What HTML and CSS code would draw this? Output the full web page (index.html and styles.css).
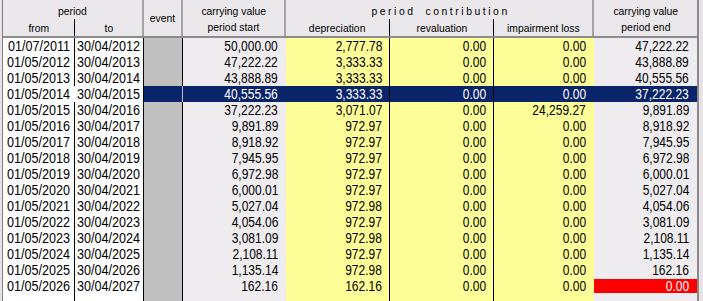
FILE: index.html
```html
<!DOCTYPE html>
<html>
<head>
<meta charset="utf-8">
<link rel="stylesheet" href="styles.css">
</head>
<body>
<div class="sheet">
  <div class="grid head">
    <div class="hgroup span2">
      <div class="htitle"><span class="t">period</span></div>
      <div class="hsub cols2">
        <div class="hs div"><span class="t">from</span></div>
        <div class="hs"><span class="t">to</span></div>
      </div>
    </div>
    <div class="hcell single"><span class="t">event</span></div>
    <div class="hcell"><div><span class="t">carrying value</span></div><div><span class="t">period start</span></div></div>
    <div class="hgroup span3">
      <div class="htitle"><span class="t spaced">period contribution</span></div>
      <div class="hsub cols3">
        <div class="hs div"><span class="t">depreciation</span></div>
        <div class="hs div"><span class="t">revaluation</span></div>
        <div class="hs"><span class="t">impairment loss</span></div>
      </div>
    </div>
    <div class="hcell last"><div><span class="t">carrying value</span></div><div><span class="t">period end</span></div></div>
  </div>

  <div class="grid row"><div class="c d"><span class="t">01/07/2011</span></div><div class="c d"><span class="t">30/04/2012</span></div><div class="c ev"></div><div class="c lv"><span class="t">50,000.00</span></div><div class="c y div"><span class="t">2,777.78</span></div><div class="c y div"><span class="t">0.00</span></div><div class="c y"><span class="t">0.00</span></div><div class="c lv"><span class="t">47,222.22</span></div></div>
  <div class="grid row"><div class="c d"><span class="t">01/05/2012</span></div><div class="c d"><span class="t">30/04/2013</span></div><div class="c ev"></div><div class="c lv"><span class="t">47,222.22</span></div><div class="c y div"><span class="t">3,333.33</span></div><div class="c y div"><span class="t">0.00</span></div><div class="c y"><span class="t">0.00</span></div><div class="c lv"><span class="t">43,888.89</span></div></div>
  <div class="grid row"><div class="c d"><span class="t">01/05/2013</span></div><div class="c d"><span class="t">30/04/2014</span></div><div class="c ev"></div><div class="c lv"><span class="t">43,888.89</span></div><div class="c y div"><span class="t">3,333.33</span></div><div class="c y div"><span class="t">0.00</span></div><div class="c y"><span class="t">0.00</span></div><div class="c lv"><span class="t">40,555.56</span></div></div>
  <div class="grid row sel"><div class="c d"><span class="t">01/05/2014</span></div><div class="c d"><span class="t">30/04/2015</span></div><div class="c ev"></div><div class="c lv"><span class="t">40,555.56</span></div><div class="c y div"><span class="t">3,333.33</span></div><div class="c y div"><span class="t">0.00</span></div><div class="c y"><span class="t">0.00</span></div><div class="c lv"><span class="t">37,222.23</span></div></div>
  <div class="grid row"><div class="c d"><span class="t">01/05/2015</span></div><div class="c d"><span class="t">30/04/2016</span></div><div class="c ev"></div><div class="c lv"><span class="t">37,222.23</span></div><div class="c y div"><span class="t">3,071.07</span></div><div class="c y div"><span class="t">0.00</span></div><div class="c y"><span class="t">24,259.27</span></div><div class="c lv"><span class="t">9,891.89</span></div></div>
  <div class="grid row"><div class="c d"><span class="t">01/05/2016</span></div><div class="c d"><span class="t">30/04/2017</span></div><div class="c ev"></div><div class="c lv"><span class="t">9,891.89</span></div><div class="c y div"><span class="t">972.97</span></div><div class="c y div"><span class="t">0.00</span></div><div class="c y"><span class="t">0.00</span></div><div class="c lv"><span class="t">8,918.92</span></div></div>
  <div class="grid row"><div class="c d"><span class="t">01/05/2017</span></div><div class="c d"><span class="t">30/04/2018</span></div><div class="c ev"></div><div class="c lv"><span class="t">8,918.92</span></div><div class="c y div"><span class="t">972.97</span></div><div class="c y div"><span class="t">0.00</span></div><div class="c y"><span class="t">0.00</span></div><div class="c lv"><span class="t">7,945.95</span></div></div>
  <div class="grid row"><div class="c d"><span class="t">01/05/2018</span></div><div class="c d"><span class="t">30/04/2019</span></div><div class="c ev"></div><div class="c lv"><span class="t">7,945.95</span></div><div class="c y div"><span class="t">972.97</span></div><div class="c y div"><span class="t">0.00</span></div><div class="c y"><span class="t">0.00</span></div><div class="c lv"><span class="t">6,972.98</span></div></div>
  <div class="grid row"><div class="c d"><span class="t">01/05/2019</span></div><div class="c d"><span class="t">30/04/2020</span></div><div class="c ev"></div><div class="c lv"><span class="t">6,972.98</span></div><div class="c y div"><span class="t">972.97</span></div><div class="c y div"><span class="t">0.00</span></div><div class="c y"><span class="t">0.00</span></div><div class="c lv"><span class="t">6,000.01</span></div></div>
  <div class="grid row"><div class="c d"><span class="t">01/05/2020</span></div><div class="c d"><span class="t">30/04/2021</span></div><div class="c ev"></div><div class="c lv"><span class="t">6,000.01</span></div><div class="c y div"><span class="t">972.97</span></div><div class="c y div"><span class="t">0.00</span></div><div class="c y"><span class="t">0.00</span></div><div class="c lv"><span class="t">5,027.04</span></div></div>
  <div class="grid row"><div class="c d"><span class="t">01/05/2021</span></div><div class="c d"><span class="t">30/04/2022</span></div><div class="c ev"></div><div class="c lv"><span class="t">5,027.04</span></div><div class="c y div"><span class="t">972.98</span></div><div class="c y div"><span class="t">0.00</span></div><div class="c y"><span class="t">0.00</span></div><div class="c lv"><span class="t">4,054.06</span></div></div>
  <div class="grid row"><div class="c d"><span class="t">01/05/2022</span></div><div class="c d"><span class="t">30/04/2023</span></div><div class="c ev"></div><div class="c lv"><span class="t">4,054.06</span></div><div class="c y div"><span class="t">972.97</span></div><div class="c y div"><span class="t">0.00</span></div><div class="c y"><span class="t">0.00</span></div><div class="c lv"><span class="t">3,081.09</span></div></div>
  <div class="grid row"><div class="c d"><span class="t">01/05/2023</span></div><div class="c d"><span class="t">30/04/2024</span></div><div class="c ev"></div><div class="c lv"><span class="t">3,081.09</span></div><div class="c y div"><span class="t">972.98</span></div><div class="c y div"><span class="t">0.00</span></div><div class="c y"><span class="t">0.00</span></div><div class="c lv"><span class="t">2,108.11</span></div></div>
  <div class="grid row"><div class="c d"><span class="t">01/05/2024</span></div><div class="c d"><span class="t">30/04/2025</span></div><div class="c ev"></div><div class="c lv"><span class="t">2,108.11</span></div><div class="c y div"><span class="t">972.97</span></div><div class="c y div"><span class="t">0.00</span></div><div class="c y"><span class="t">0.00</span></div><div class="c lv"><span class="t">1,135.14</span></div></div>
  <div class="grid row"><div class="c d"><span class="t">01/05/2025</span></div><div class="c d"><span class="t">30/04/2026</span></div><div class="c ev"></div><div class="c lv"><span class="t">1,135.14</span></div><div class="c y div"><span class="t">972.98</span></div><div class="c y div"><span class="t">0.00</span></div><div class="c y"><span class="t">0.00</span></div><div class="c lv"><span class="t">162.16</span></div></div>
  <div class="grid row"><div class="c d"><span class="t">01/05/2026</span></div><div class="c d"><span class="t">30/04/2027</span></div><div class="c ev"></div><div class="c lv"><span class="t">162.16</span></div><div class="c y div"><span class="t">162.16</span></div><div class="c y div"><span class="t">0.00</span></div><div class="c y"><span class="t">0.00</span></div><div class="c lv neg"><span class="t">0.00</span></div></div>
  <div class="grid row filler"><div class="c d"></div><div class="c d"></div><div class="c ev"></div><div class="c lv"></div><div class="c y div"></div><div class="c y div"></div><div class="c y"></div><div class="c lv"></div></div>
</div>
</body>
</html>
```
FILE: styles.css
```css
html, body {
  margin: 0;
  padding: 0;
  background: #e6e2e6;
  overflow: hidden;
}
body {
  width: 703px;
  height: 301px;
  font-family: "Liberation Sans", Arial, sans-serif;
  color: #000;
}
.sheet {
  margin-left: 2px;
  width: 694px;
  border-left: 1px solid #808080;
  border-right: 2px solid #8a8a8a;
  display: flex;
  flex-direction: column;
}
.grid {
  display: grid;
  grid-template-columns: 72px 69px 39px 103px 104px 104px 100px 103px;
}
.t {
  display: inline-block;
  white-space: nowrap;
  transform-origin: center;
}

/* header */
.head {
  height: 38px;
  box-sizing: border-box;
  background: #ebe8eb;
  border-bottom: 2px solid #8c8c8c;
  font-size: 11.8px;
  line-height: 16px;
  text-align: center;
}
.head .t { transform: scaleX(0.88); }
.hgroup, .hcell {
  box-sizing: border-box;
  border-right: 2px solid #a3a3a3;
  padding-top: 3px;
}
.hcell.last { border-right: none; }
.span2 { grid-column: span 2; }
.span3 { grid-column: span 3; }
.hcell.single {
  display: flex;
  align-items: center;
  justify-content: center;
  padding-top: 0;
  padding-bottom: 1px;
}
.htitle { height: 16px; }
.head .t.spaced { letter-spacing: 2.9px; word-spacing: 5px; margin-right: -2.9px; }
.hsub {
  display: grid;
  height: 17px;
}
.cols2 { grid-template-columns: 72px 1fr; }
.cols3 { grid-template-columns: 104px 104px 1fr; }
.hs { box-sizing: border-box; padding-top: 1px; }
.hs.div { border-right: 1px solid #000; }

/* rows */
.row {
  height: 16px;
  font-size: 15px;
  line-height: 16px;
}
.c {
  box-sizing: border-box;
  height: 16px;
  white-space: nowrap;
  text-align: right;
  padding-right: 8px;
}
.c .t { transform: scaleX(0.8); transform-origin: right center; }
.c.d {
  background: #fff;
  display: flex;
  justify-content: center;
  padding-right: 0;
  border-right: 1px solid #000;
}
.c.d .t { transform: scaleX(0.84); transform-origin: center; }
.c.ev {
  background: #c0c0c0;
  border-right: 1px solid #000;
}
.c.lv { background: #efecf0; }
.c.y { background: #ffff99; }
.c.y.div { border-right: 1px solid #000; padding-right: 7px; }

.sel .c.d:first-child { border-right-color: #fff; }
.sel .c.ev, .sel .c.lv, .sel .c.y {
  background: #0a246a;
  color: #fff;
}
.sel .c.ev { border-right-color: #b8bcc8; }

.c.lv.neg {
  background: #ff0000;
  color: #fff;
  border-top: 1px solid #efecf0;
  border-bottom: 1px solid #efecf0;
  line-height: 14px;
}
.filler, .filler .c { height: 10px; }
```
